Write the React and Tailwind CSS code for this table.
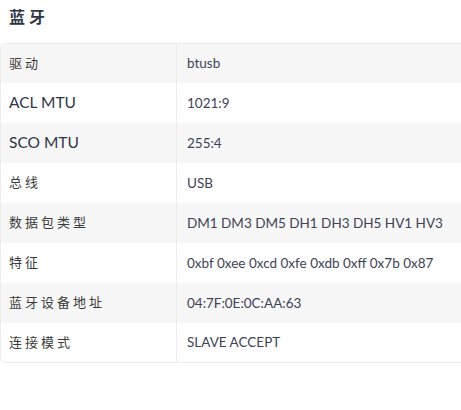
const rows = [
  { label: "驱动", value: "btusb", cjk: true },
  { label: "ACL MTU", value: "1021:9" },
  { label: "SCO MTU", value: "255:4" },
  { label: "总线", value: "USB", cjk: true },
  { label: "数据包类型", value: "DM1 DM3 DM5 DH1 DH3 DH5 HV1 HV3", cjk: true },
  { label: "特征", value: "0xbf 0xee 0xcd 0xfe 0xdb 0xff 0x7b 0x87", cjk: true },
  { label: "蓝牙设备地址", value: "04:7F:0E:0C:AA:63", cjk: true },
  { label: "连接模式", value: "SLAVE ACCEPT", cjk: true },
];

const App = () => {
  return (
    <div
      className="w-[461px] h-[410px] bg-white overflow-hidden"
      style={{ fontFamily: "Lato, 'Noto Sans CJK SC', sans-serif" }}
    >
      <h2 className="pl-[9px] pt-[5px] h-[43px] text-[16px] font-semibold tracking-[4px] text-[#2f3545] leading-[24px]">
        蓝牙
      </h2>
      <div className="w-[480px] border border-[#ececec] rounded-[5px]">
        {rows.map((row, i) => (
          <div
            key={row.label}
            className={`flex items-center ${i === 0 || i === rows.length - 1 ? "h-[39px]" : "h-[40px]"} ${i % 2 === 0 ? "bg-[#f7f7f7]" : "bg-white"} ${i === 0 ? "rounded-tl-[5px]" : ""} ${i === rows.length - 1 ? "rounded-bl-[5px]" : ""}`}
          >
            <div className="w-[176px] h-full flex items-center pl-[8px] border-r border-[#ececec]">
              {row.cjk ? (
                <span className="text-[13px] tracking-[3px] text-[#3a3a3a]">{row.label}</span>
              ) : (
                <span className="text-[15.5px] text-[#2f3545]">{row.label}</span>
              )}
            </div>
            <div className="pl-[10px] text-[13.5px] text-[#3d4256]">{row.value}</div>
          </div>
        ))}
      </div>
    </div>
  );
};

export default App;
